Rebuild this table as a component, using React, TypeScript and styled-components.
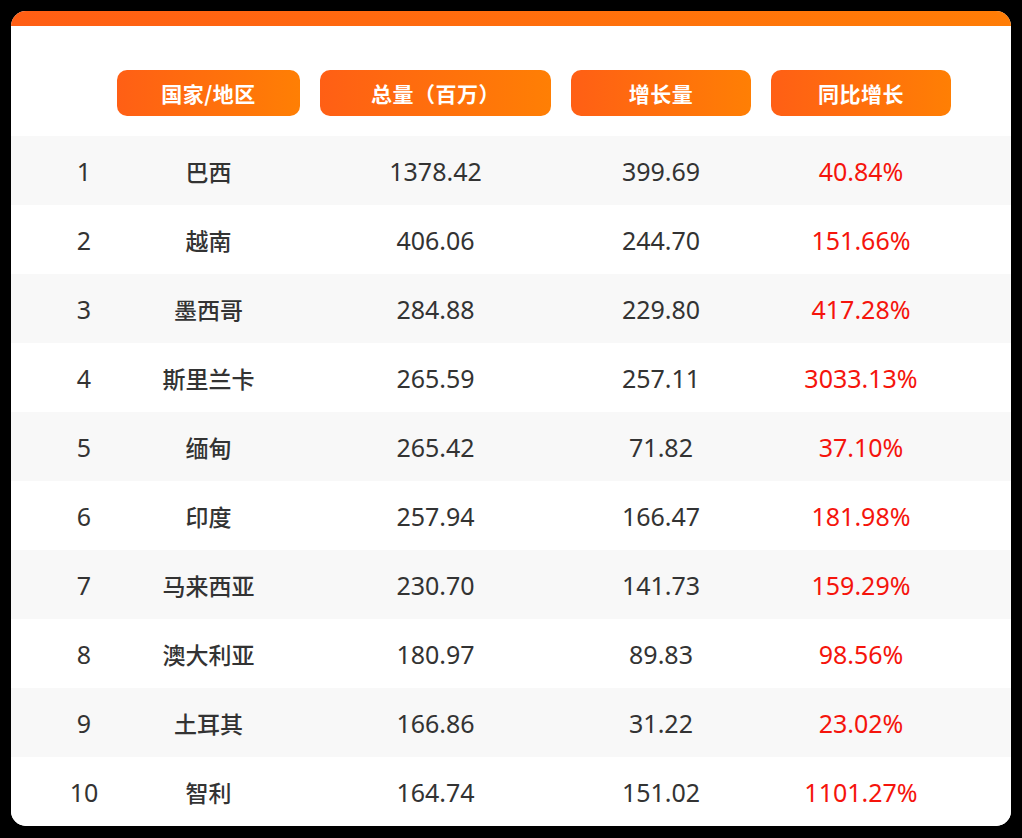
import { styled, createGlobalStyle } from "styled-components";

const GlobalStyle = createGlobalStyle`
    html, body {
        margin: 0;
        padding: 0;
        background: #000;
    }
`

const Page = styled.div`
    width: 1022px;
    height: 838px;
    padding: 11px;
    box-sizing: border-box;
    background: #000;
`

const Card = styled.div`
    background: #fff;
    border-radius: 15px;
    overflow: hidden;
    width: 1000px;
    height: 815px;
    display: flex;
    flex-direction: column;
`

const TopBar = styled.div`
    height: 15px;
    background: linear-gradient(to right, #ff5e14, #ff7d06);
`

const Grid = styled.div`
    display: grid;
    grid-template-columns: 26px 183px 231px 180px 180px;
    column-gap: 20px;
    padding: 0 60px;
    align-items: center;
`

const HeaderRow = styled(Grid)`
    padding-top: 44px;
    padding-bottom: 20px;
`

const HeaderPill = styled.div<{ $col: number }>`
    grid-column: ${props => props.$col};
    height: 46px;
    border-radius: 10px;
    background: linear-gradient(to right, #ff5f15, #ff7f04);
    color: #fff;
    font-family: "Noto Sans CJK SC", "Noto Sans", sans-serif;
    font-weight: 700;
    font-size: 21px;
    display: flex;
    align-items: center;
    justify-content: center;
    letter-spacing: 0.5px;
`

const BodyRow = styled(Grid)<{ $shaded: boolean }>`
    height: 69px;
    background: ${props => props.$shaded ? "#f8f8f8" : "#fff"};
`

const Cell = styled.div<{ $red?: boolean, $cjk?: boolean }>`
    text-align: center;
    white-space: nowrap;
    font-family: ${props => props.$cjk
        ? `"Noto Sans CJK SC", sans-serif`
        : `"Noto Sans", "Noto Sans CJK SC", sans-serif`};
    font-size: ${props => props.$cjk ? 23 : 25}px;
    font-weight: ${props => props.$cjk ? 500 : 400};
    color: ${props => props.$red ? "#f5140c" : "#333"};
    display: flex;
    justify-content: center;
`

const headers = ["国家/地区", "总量（百万）", "增长量", "同比增长"];

const rows = [
    ["巴西", "1378.42", "399.69", "40.84%"],
    ["越南", "406.06", "244.70", "151.66%"],
    ["墨西哥", "284.88", "229.80", "417.28%"],
    ["斯里兰卡", "265.59", "257.11", "3033.13%"],
    ["缅甸", "265.42", "71.82", "37.10%"],
    ["印度", "257.94", "166.47", "181.98%"],
    ["马来西亚", "230.70", "141.73", "159.29%"],
    ["澳大利亚", "180.97", "89.83", "98.56%"],
    ["土耳其", "166.86", "31.22", "23.02%"],
    ["智利", "164.74", "151.02", "1101.27%"],
];

const App = () => {
    return (
        <Page>
            <GlobalStyle />
            <Card>
                <TopBar />
                <HeaderRow>
                    {headers.map((h, i) => (
                        <HeaderPill key={h} $col={i + 2}>{h}</HeaderPill>
                    ))}
                </HeaderRow>
                {rows.map((r, i) => (
                    <BodyRow key={i} $shaded={i % 2 === 0}>
                        <Cell>{i + 1}</Cell>
                        <Cell $cjk>{r[0]}</Cell>
                        <Cell>{r[1]}</Cell>
                        <Cell>{r[2]}</Cell>
                        <Cell $red>{r[3]}</Cell>
                    </BodyRow>
                ))}
            </Card>
        </Page>
    );
}

export default App;
